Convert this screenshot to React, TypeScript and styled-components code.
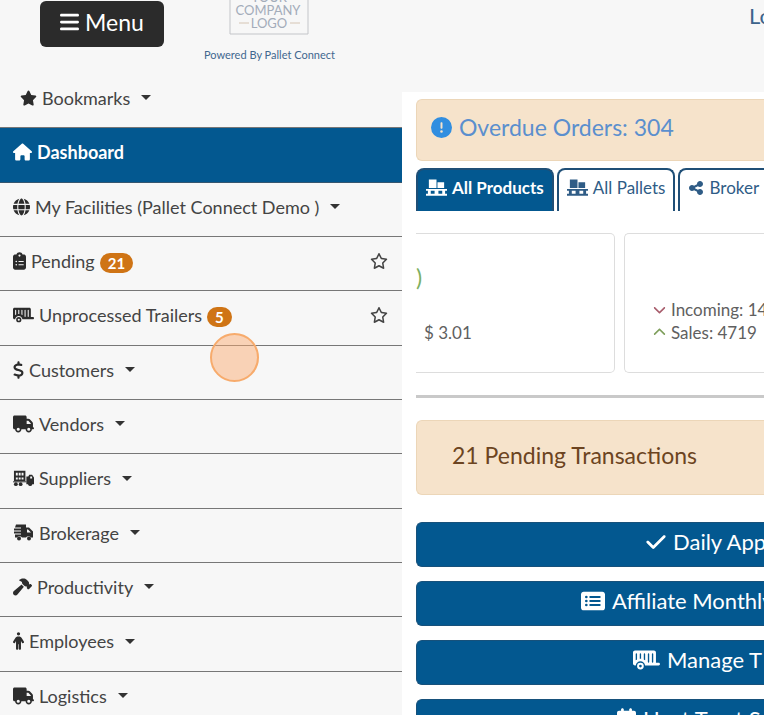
import React from "react";
import styled, { createGlobalStyle, css } from "styled-components";
import type { IconType } from "react-icons";
import {
  FaBars, FaStar, FaRegStar, FaHouse, FaGlobe, FaClipboardList, FaTrailer,
  FaDollarSign, FaTruck, FaHammer, FaPerson, FaShareNodes, FaCheck,
  FaRectangleList, FaCalendar, FaChevronUp, FaChevronDown,
  FaCircleExclamation,
} from "react-icons/fa6";

const blue = "#035890";
const navy = "#1f4f77";

const GlobalStyle = createGlobalStyle`
  *, *::before, *::after { box-sizing: border-box; }
  body {
    margin: 0;
    background: #f7f7f7;
    color: #444;
    font: 18px/24px Lato, "Open Sans", sans-serif;
    overflow: hidden;
  }
  button { font: inherit; cursor: pointer; }
  svg { flex: none; }
`;

const Page = styled.div`
  display: flex;
  height: 100vh;
  overflow: hidden;
`;

const Sidebar = styled.aside`
  flex: 0 0 402px;
  background: #f7f7f7;
`;

const Brand = styled.header`
  display: flex;
  align-items: flex-start;
  height: 74px;
  padding: 1px 40px 0;
  gap: 40px;
`;

const MenuButton = styled.button`
  display: flex;
  align-items: center;
  justify-content: center;
  gap: 6px;
  width: 124px;
  height: 46px;
  padding: 0 0 4px;
  border: 0;
  border-radius: 6px;
  background: #2b2b2b;
  color: #fff;
  font-size: 23px;
  svg { width: 19px; height: 22px; }
`;

const BrandLink = styled.a`
  display: flex;
  flex-direction: column;
  align-items: center;
  gap: 12px;
  margin-top: -1px;
  color: #42688f;
  font-size: 11px;
  line-height: 16px;
  text-decoration: none;
`;

const NavList = styled.ul`
  list-style: none;
  margin: 0;
  padding: 0;
`;

const NavRow = styled.li<{ $active?: boolean }>`
  display: flex;
  align-items: center;
  justify-content: space-between;
  height: 54px;
  padding: 0 14px 6px 13px;
  border-bottom: 1px solid #777;
  &:nth-child(3n + 2) { height: 55px; }
  ${(p) => p.$active && css`
    background: ${blue};
    border-color: #35566f;
    a { color: #fff; font-weight: 700; }
  `}
`;

const NavLink = styled.a<{ $nested?: boolean }>`
  display: flex;
  align-items: center;
  gap: 5px;
  padding-left: ${(p) => (p.$nested ? 7 : 0)}px;
  color: #444;
  text-decoration: none;
  white-space: pre;
`;

const IconBox = styled.span<{ $w: number }>`
  display: flex;
  color: #2c2c2c;
  a[aria-current] & { color: #fff; }
  svg { width: ${(p) => p.$w}px; height: 18px; }
`;

const Caret = styled.span`
  margin-left: 6px;
  border: 5px solid transparent;
  border-top-color: #333;
  border-bottom: 0;
`;

const Badge = styled.span`
  min-width: 24px;
  height: 20px;
  margin-top: 4px;
  padding: 0 8px;
  border-radius: 10px;
  background: #cf7415;
  color: #fff;
  font-size: 15px;
  font-weight: 700;
  line-height: 20px;
`;

const StarButton = styled.button`
  display: flex;
  padding: 0;
  border: 0;
  background: none;
  color: #444;
`;

const Content = styled.div`
  flex: 1;
  min-width: 0;
`;

const TopBar = styled.header`
  display: flex;
  justify-content: flex-end;
  height: 92px;
  overflow: hidden;
`;

const TopLink = styled.a`
  width: 15px;
  margin-top: 3px;
  color: #3c638b;
  font-size: 22px;
  line-height: 26px;
  text-decoration: none;
  white-space: nowrap;
`;

const Main = styled.main`
  min-height: calc(100vh - 92px);
  padding: 7px 0 0 14px;
  background: #fff;
`;

const Notice = styled.section<{ $large?: boolean }>`
  display: flex;
  align-items: center;
  gap: 7px;
  height: ${(p) => (p.$large ? 75 : 62)}px;
  padding: ${(p) => (p.$large ? "0 0 6px 35px" : "0 0 6px 14px")};
  border: 1px solid #ecd6b8;
  border-right: 0;
  border-radius: 6px 0 0 6px;
  background: #f6e3cb;
  color: ${(p) => (p.$large ? "#6c4421" : "#5b8fce")};
  font-size: 23px;
  white-space: nowrap;
  svg { width: 21px; height: 21px; color: #318ee0; }
`;

const Tabs = styled.div`
  display: flex;
  gap: 3px;
  margin-top: 7px;
`;

const Tab = styled.button<{ $active?: boolean; $last?: boolean }>`
  display: flex;
  align-items: center;
  gap: 5px;
  height: 43px;
  padding: 0 8px 6px;
  border: 2px solid ${navy};
  border-bottom: 0;
  border-radius: 8px 8px 0 0;
  background: ${(p) => (p.$active ? blue : "#fff")};
  color: ${(p) => (p.$active ? "#fff" : "#2f5c86")};
  font-size: 17px;
  font-weight: ${(p) => (p.$active ? 700 : 400)};
  white-space: nowrap;
  ${(p) => p.$last && css`
    flex: 1;
    min-width: 0;
    padding-right: 0;
    border-right: 0;
    border-top-right-radius: 0;
  `}
`;

const Cards = styled.div`
  display: flex;
  gap: 9px;
  margin-top: 22px;
  font-size: 17px;
  line-height: 23px;
  color: #606060;
`;

const PriceCard = styled.section`
  flex: 0 0 199px;
  height: 140px;
  padding: 29px 0 0;
  border: 1px solid #ddd;
  border-left: 0;
  border-radius: 0 5px 5px 0;
`;

const Rating = styled.div`
  color: #7caf62;
  font-size: 23px;
  line-height: 28px;
`;

const Price = styled.div`
  padding: 30px 0 0 8px;
`;

const StatsCard = styled.section`
  flex: 1;
  min-width: 0;
  height: 140px;
  padding: 64px 0 0 28px;
  border: 1px solid #ddd;
  border-right: 0;
  border-radius: 5px 0 0 5px;
  overflow: hidden;
`;

const Stat = styled.div<{ $tone: string }>`
  display: flex;
  align-items: center;
  gap: 5px;
  white-space: nowrap;
  svg { width: 13px; height: 15px; color: ${(p) => p.$tone}; }
`;

const Divider = styled.hr`
  height: 3px;
  margin: 22px 0;
  border: 0;
  background: #c9c9c9;
`;

const Actions = styled.div`
  display: grid;
  gap: 14px;
  margin-top: 27px;
`;

const ActionButton = styled.button<{ $inset: number; $icon: number }>`
  display: flex;
  align-items: center;
  gap: 7px;
  height: 45px;
  padding: 0 0 6px ${(p) => p.$inset}px;
  border: 1px solid #17517b;
  border-right: 0;
  border-radius: 6px 0 0 6px;
  background: ${blue};
  color: #fff;
  font-size: 22px;
  white-space: nowrap;
  overflow: hidden;
  svg { width: ${(p) => p.$icon}px; height: 22px; }
`;

const Pointer = styled.div`
  position: absolute;
  left: 210px;
  top: 333px;
  width: 49px;
  height: 49px;
  border: 2px solid #f7ab6c;
  border-radius: 50%;
  background: rgba(250, 170, 110, 0.48);
  pointer-events: none;
`;

const PalletIcon = () => (
  <svg width="21" height="18" viewBox="0 0 22 18" fill="currentColor" aria-hidden="true">
    <path d="M3 0h8v9H3zM12 3h7v6h-7zM0 10h22v2H0zM2 12h3v3H2zM9 12h4v3H9zM17 12h3v3h-3zM0 15h22v2H0z" />
  </svg>
);

const SlattedTruckIcon = () => (
  <svg viewBox="0 0 22 17" fill="currentColor" aria-hidden="true">
    <path fillRule="evenodd" d="M1 1h12v11H1zM3 3v3h2V3zM6 3v3h2V3zM9 3v3h2V3zM3 8v2h2V8zM6 8v2h2V8zM9 8v2h2V8z" />
    <path fillRule="evenodd" d="M14 7h2l1-2h3l2 3v7h-8zM18 7v2h2V7z" />
    <path d="M0 12h14v1H0z" />
    <circle cx="3" cy="15" r="2" /><circle cx="8" cy="15" r="2" /><circle cx="18" cy="15" r="2" />
  </svg>
);

const BrokerTruckIcon = () => (
  <svg viewBox="0 0 21 17" fill="currentColor" aria-hidden="true">
    <path fillRule="evenodd" d="M3 0h10v3h3l4 4v6h-2a3 3 0 0 0-5 0H9a3 3 0 0 0-5 0H2v-3h6V9H1V7h7V6H1V4h7V3H2zM14 5v3h4l-3-3z" />
    <circle cx="6" cy="14" r="2" /><circle cx="16" cy="14" r="2" />
  </svg>
);

const LogoMark = () => (
  <svg width="80" height="35" viewBox="0 0 80 35" role="img" aria-label="Your company logo">
    <path d="M1 0V34H79V0" fill="none" stroke="#c3c5c9" />
    <path d="M10 23h10M61 23h10" stroke="#d5c5b4" />
    <g fill="#a3acba" fontFamily="Lato, sans-serif" fontSize="13" textAnchor="middle">
      <text x="40" y="2">YOUR</text>
      <text x="39" y="15">COMPANY</text>
      <text x="40" y="28">LOGO</text>
    </g>
  </svg>
);

type Item = {
  label: string;
  icon: IconType | (() => React.JSX.Element);
  w: number;
  menu?: boolean;
  badge?: number;
  active?: boolean;
  nested?: boolean;
};

const items: Item[] = [
  { label: "Bookmarks", icon: FaStar, w: 17, menu: true, nested: true },
  { label: "Dashboard", icon: FaHouse, w: 19, active: true },
  { label: "My Facilities (Pallet Connect Demo )", icon: FaGlobe, w: 17, menu: true },
  { label: "Pending", icon: FaClipboardList, w: 13, badge: 21 },
  { label: "Unprocessed Trailers", icon: FaTrailer, w: 21, badge: 5 },
  { label: "Customers", icon: FaDollarSign, w: 11, menu: true },
  { label: "Vendors", icon: FaTruck, w: 21, menu: true },
  { label: "Suppliers", icon: SlattedTruckIcon, w: 21, menu: true },
  { label: "Brokerage", icon: BrokerTruckIcon, w: 21, menu: true },
  { label: "Productivity", icon: FaHammer, w: 19, menu: true },
  { label: "Employees", icon: FaPerson, w: 11, menu: true },
  { label: "Logistics", icon: FaTruck, w: 21, menu: true },
];

const actions = [
  { label: "Daily App", icon: FaCheck, w: 20, inset: 229 },
  { label: "Affiliate Monthly", icon: FaRectangleList, w: 24, inset: 164 },
  { label: "Manage T", icon: FaTrailer, w: 27, inset: 216 },
  { label: "Heat Treat S", icon: FaCalendar, w: 19, inset: 200 },
];

export default function App() {
  return (
    <>
      <GlobalStyle />
      <Page>
        <Sidebar>
          <Brand>
            <MenuButton><FaBars preserveAspectRatio="none" />Menu</MenuButton>
            <BrandLink href="#home"><LogoMark />Powered By Pallet Connect</BrandLink>
          </Brand>
          <nav>
            <NavList>
              {items.map(({ label, icon: Icon, w, menu, badge, active, nested }) => (
                <NavRow key={label} $active={active}>
                  <NavLink href="#" $nested={nested} aria-current={active ? "page" : undefined}>
                    <IconBox $w={w}><Icon /></IconBox>
                    {label}
                    {menu && <Caret />}
                    {badge && <Badge>{badge}</Badge>}
                  </NavLink>
                  {badge && (
                    <StarButton aria-label={`Bookmark ${label}`}><FaRegStar size={18} /></StarButton>
                  )}
                </NavRow>
              ))}
            </NavList>
          </nav>
        </Sidebar>
        <Content>
          <TopBar><TopLink href="#">Lo</TopLink></TopBar>
          <Main>
            <Notice><FaCircleExclamation />Overdue Orders: 304</Notice>
            <Tabs role="tablist">
              <Tab role="tab" aria-selected="true" $active><PalletIcon />All Products</Tab>
              <Tab role="tab" aria-selected="false"><PalletIcon />All Pallets</Tab>
              <Tab role="tab" aria-selected="false" $last><FaShareNodes size={16} />Broker</Tab>
            </Tabs>
            <Cards>
              <PriceCard>
                <Rating>)</Rating>
                <Price>$ 3.01</Price>
              </PriceCard>
              <StatsCard>
                <Stat $tone="#a85d6c"><FaChevronDown />Incoming: 14</Stat>
                <Stat $tone="#7f9f5c"><FaChevronUp />Sales: 4719</Stat>
              </StatsCard>
            </Cards>
            <Divider />
            <Notice $large>21 Pending Transactions</Notice>
            <Actions>
              {actions.map(({ label, icon: Icon, w, inset }) => (
                <ActionButton key={label} $inset={inset} $icon={w}>
                  <Icon />{label}
                </ActionButton>
              ))}
            </Actions>
          </Main>
        </Content>
      </Page>
      <Pointer />
    </>
  );
}
